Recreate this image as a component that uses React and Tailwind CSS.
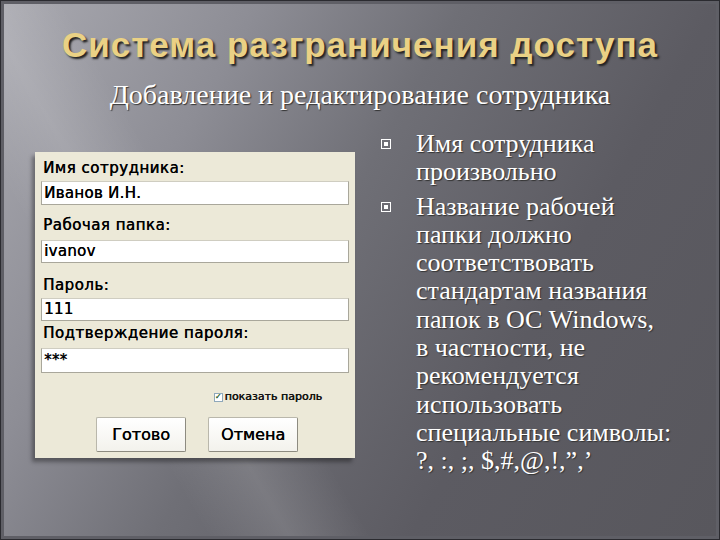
export default function App() {
  const bullets = [
    ["Имя сотрудника", "произвольно"],
    [
      "Название рабочей",
      "папки должно",
      "соответствовать",
      "стандартам названия",
      "папок в ОС Windows,",
      "в частности, не",
      "рекомендуется",
      "использовать",
      "специальные символы:",
      "?, :, ;, $,#,@,!,”,’",
    ],
  ];

  // label, value, top gap, gap before input, input height
  const fields = [
    ["Имя сотрудника:", "Иванов И.Н.", "mt-[7px]", "mt-[4px]", "h-[24px]"],
    ["Рабочая папка:", "ivanov", "mt-[11px]", "mt-[6px]", "h-[23px]"],
    ["Пароль:", "111", "mt-[13px]", "mt-[4px]", "h-[23px]"],
    ["Подтверждение пароля:", "***", "mt-[3px]", "mt-[6px]", "h-[25px]"],
  ];

  return (
    <div className="w-[720px] h-[540px] overflow-hidden bg-[#2b2b30] p-[1px]">
      <div className="relative w-full h-full border-[3px] border-[#5f5f66] bg-[linear-gradient(120deg,#a9a9b0_0%,#8d8d95_25%,#6f6f76_45%,#5c5b62_70%,#58575d_100%)]">
        {/* diagonal light streak */}
        <div className="absolute inset-0 bg-[linear-gradient(60deg,transparent_0%,transparent_20%,rgba(255,255,255,0.12)_28%,transparent_36%,transparent_100%)]" />

        <div className="relative h-[122px] flex flex-col items-center">
          <h1
            className="mt-[19px] text-[35px] leading-[44px] font-bold tracking-[1px] text-[#ead185] [text-shadow:2px_2px_2px_#222]"
            style={{ fontFamily: '"Liberation Sans", Arial, sans-serif' }}
          >
            Система разграничения доступа
          </h1>
          <h2
            className="mt-[12px] text-[28px] leading-[32px] text-white [text-shadow:1px_1px_1px_#333]"
            style={{ fontFamily: '"Liberation Serif", "Times New Roman", serif' }}
          >
            Добавление и редактирование сотрудника
          </h2>
        </div>

        <div className="relative flex">
          {/* form panel */}
          <div
            className="ml-[31px] mt-[26px] w-[320px] h-[306px] bg-[#ece9d8] shadow-[-3px_4px_4px_rgba(0,0,0,0.35)] px-[6px] flex flex-col [text-shadow:0.4px_0_0_#000]"
            style={{ fontFamily: '"DejaVu Sans", Verdana, sans-serif' }}
          >
            {fields.map(([label, value, top, gap, h], i) => (
              <div key={i} className={top}>
                <div className="text-[15px] leading-[18px] text-black pl-[2px] tracking-[0.5px]">{label}</div>
                <div className={`${gap} ${h} w-[308px] bg-white border border-[#a9a79b] border-t-[#cfcdc1] flex items-center px-[2px] text-[15px] tracking-[0.3px] text-black`}>
                  {value}
                </div>
              </div>
            ))}
            <div className="flex justify-end pr-[27px] mt-[17px] items-center text-[11px] leading-[14px] text-[#111]">
              <span className="w-[9px] h-[9px] border border-[#8fa8ba] bg-white flex items-center justify-center text-[8px] leading-none text-[#3b8a3b] mr-[2px]">✓</span>
              показать пароль
            </div>
            <div className="flex mt-[13px] ml-[55px] gap-[22px]">
              {["Готово", "Отмена"].map((b) => (
                <div
                  key={b}
                  className="w-[90px] h-[35px] flex items-center justify-center bg-[linear-gradient(#ffffff,#f3f2ec)] border border-[#b9b7ab] border-b-[#8d8b80] border-r-[#8d8b80] rounded-[2px] text-[16px] text-black"
                >
                  {b}
                </div>
              ))}
            </div>
          </div>

          {/* bullets */}
          <div
            className="ml-[26px] mt-[4px] flex flex-col gap-[6px]"
            style={{ fontFamily: '"Liberation Serif", "Times New Roman", serif' }}
          >
            {bullets.map((lines, i) => (
              <div key={i} className="flex">
                <div className="w-[35px] pt-[9px]">
                  <div className="w-[10px] h-[10px] border border-white flex items-center justify-center">
                    <div className="w-[4px] h-[4px] bg-white" />
                  </div>
                </div>
                <div className="text-[26px] leading-[28.3px] text-white [text-shadow:1px_1px_1px_#333]">
                  {lines.map((l, j) => (
                    <div key={j} className="whitespace-nowrap">{l}</div>
                  ))}
                </div>
              </div>
            ))}
          </div>
        </div>
      </div>
    </div>
  );
}
